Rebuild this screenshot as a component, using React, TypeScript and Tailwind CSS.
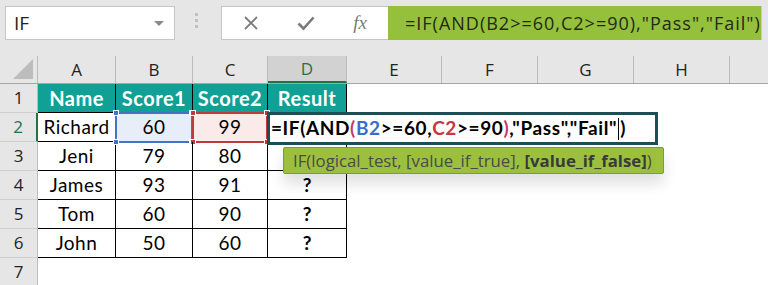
import React from 'react';

const cols = [
  { key: 'A', w: 'w-[78px]' },
  { key: 'B', w: 'w-[77px]' },
  { key: 'C', w: 'w-[75px]' },
  { key: 'D', w: 'w-[79px]' },
  { key: 'E', w: 'w-[95px]' },
  { key: 'F', w: 'w-[96px]' },
  { key: 'G', w: 'w-[96px]' },
  { key: 'H', w: 'w-[96px]' },
];

const data = [
  ['Richard', '60', '99', ''],
  ['Jeni', '79', '80', ''],
  ['James', '93', '91', '?'],
  ['Tom', '60', '90', '?'],
  ['John', '50', '60', '?'],
];

const cellFont = { fontFamily: 'Lato, "Liberation Sans", sans-serif' };
const uiFont = { fontFamily: '"Open Sans", "Noto Sans", sans-serif' };

function Corner({ pos, color }: { pos: string; color: string }) {
  return <span className={`absolute h-[6px] w-[6px] border border-white ${pos} ${color}`} />;
}

export default function App() {
  return (
    <div className="relative h-[285px] w-[768px] overflow-hidden bg-white">
      {/* formula bar */}
      <div className="flex h-[56px] items-start bg-[#e6e6e6] pt-[6px]">
        <div className="ml-[5px] flex h-[34px] w-[170px] items-center justify-between border border-[#c6c6c6] bg-white pl-[8px] pr-[10px] text-[19px] text-[#222]" style={uiFont}>
          <span>IF</span>
          <span className="h-0 w-0 border-x-[5px] border-t-[5px] border-x-transparent border-t-[#8a8a8a]" />
        </div>
        <div className="ml-[20px] mt-[7px] flex flex-col gap-[3px]">
          <span className="h-[3px] w-[3px] bg-[#c0c0c0]" />
          <span className="h-[3px] w-[3px] bg-[#c0c0c0]" />
          <span className="h-[3px] w-[3px] bg-[#c0c0c0]" />
        </div>
        <div className="ml-[23px] flex h-[34px] items-center border border-[#c6c6c6] bg-white">
          <div className="flex w-[166px] items-center justify-around pl-[2px] pr-[2px] text-[#7a7a7a]">
            <svg width="16" height="16" viewBox="0 0 16 16"><path d="M2 2 L14 14 M14 2 L2 14" stroke="#7a7a7a" strokeWidth="1.8" /></svg>
            <svg width="18" height="16" viewBox="0 0 18 16"><path d="M1.5 8.5 L6.5 13.5 L16.5 2.5" stroke="#7a7a7a" strokeWidth="2.6" fill="none" /></svg>
            <span className="text-[19px] italic text-[#7a7a7a]" style={{ fontFamily: '"Liberation Serif", serif' }}>fx</span>
          </div>
          <div className="flex h-[34px] w-[373px] items-center bg-[#95c03c] pl-[17px] text-[18px] tracking-[1px] text-[#1f2a14]" style={uiFont}>
            =IF(AND(B2&gt;=60,C2&gt;=90),"Pass","Fail")
          </div>
        </div>
      </div>

      {/* sheet */}
      <div className="relative" style={cellFont}>
        {/* column header */}
        <div className="flex h-[28px] border-b border-[#a6a6a6] bg-[#e6e6e6]">
          <div className="relative w-[38px] border-r border-[#bcbcbc]">
            <span className="absolute bottom-[4px] right-[4px] h-0 w-0 border-b-[20px] border-l-[20px] border-b-[#bdbdbd] border-l-transparent" />
          </div>
          {cols.map((c) => (
            <div
              key={c.key}
              className={`${c.w} flex items-center justify-center border-r border-[#bcbcbc] text-[17px] ${c.key === 'D' ? 'border-b-2 border-b-[#217346] bg-[#d2d2d2] text-[#217346]' : 'text-[#222]'}`}
              style={uiFont}
            >
              {c.key}
            </div>
          ))}
          <div className="flex-1" />
        </div>

        {/* row 1 */}
        <Row n={1}>
          {['Name', 'Score1', 'Score2', 'Result'].map((h, i) => (
            <div key={h} className={`${cols[i].w} flex items-center justify-center border-b border-r border-black bg-[#10a096] text-[20px] font-bold tracking-[0.5px] text-white`}>
              {h}
            </div>
          ))}
        </Row>

        {data.map((r, ri) => (
          <Row key={ri} n={ri + 2} active={ri === 0}>
            <div className={`${cols[0].w} flex items-center justify-center border-b border-r border-black text-[19px] tracking-[0.5px] text-black`}>{r[0]}</div>
            <div className={`${cols[1].w} relative flex items-center justify-center border-b border-r border-black text-[19px] tracking-[0.5px] text-black`}>
              {ri === 0 && (
                <div className="absolute -left-[1px] -top-[1px] h-[31px] w-[78px] border-2 border-[#4472c4] bg-[#e8eef9]">
                  <Corner pos="-left-[4px] -top-[4px]" color="bg-[#4472c4]" />
                  <Corner pos="-right-[4px] -top-[4px]" color="bg-[#4472c4]" />
                  <Corner pos="-left-[4px] -bottom-[4px]" color="bg-[#4472c4]" />
                  <Corner pos="-right-[4px] -bottom-[4px]" color="bg-[#4472c4]" />
                </div>
              )}
              <span className="relative">{r[1]}</span>
            </div>
            <div className={`${cols[2].w} relative flex items-center justify-center border-b border-r border-black text-[19px] tracking-[0.5px] text-black`}>
              {ri === 0 && (
                <div className="absolute -left-[1px] -top-[1px] h-[31px] w-[76px] border-2 border-[#c0393f] bg-[#fbeaea]">
                  <Corner pos="-left-[4px] -top-[4px]" color="bg-[#c0393f]" />
                  <Corner pos="-right-[4px] -top-[4px]" color="bg-[#c0393f]" />
                  <Corner pos="-left-[4px] -bottom-[4px]" color="bg-[#c0393f]" />
                  <Corner pos="-right-[4px] -bottom-[4px]" color="bg-[#c0393f]" />
                </div>
              )}
              <span className="relative">{r[2]}</span>
            </div>
            <div className={`${cols[3].w} flex items-center justify-center border-b border-r border-black text-[19px] font-bold text-black`}>{r[3]}</div>
          </Row>
        ))}

        <Row n={7} />

        {/* in-cell formula editor */}
        <div className="absolute left-[267px] top-[56px] flex h-[33px] w-[391px] items-center border-[3px] border-[#1c4f53] bg-white pl-[1px] text-[19px] font-bold tracking-[0.6px] text-black">
          <span>=IF(AND</span>
          <span className="text-[#c2386c]">(</span>
          <span className="text-[#3a6fc9]">B2</span>
          <span>&gt;=60,</span>
          <span className="text-[#c4393f]">C2</span>
          <span>&gt;=90</span>
          <span className="text-[#c2386c]">)</span>
          <span>,"Pass","Fail"</span>
          <span className="mx-[1px] h-[22px] w-[1px] bg-black" />
          <span>)</span>
        </div>

        {/* function tooltip */}
        <div
          className="absolute left-[283px] top-[91px] flex h-[27px] w-[381px] items-center rounded-[2px] border border-[#7d9e2a] bg-[#9cc03e] pl-[9px] text-[16.8px] text-[#4a4a4a] shadow-[0_10px_14px_rgba(0,0,0,0.12)]"
          style={uiFont}
        >
          IF(logical_test, [value_if_true],&nbsp;<b className="text-[#3a3a3a]">[value_if_false]</b>)
        </div>
      </div>
    </div>
  );
}

function Row({ n, active, children }: { n: number; active?: boolean; children?: React.ReactNode }) {
  return (
    <div className="flex h-[29px]">
      <div
        className={`flex w-[38px] items-center justify-center border-b bg-[#e6e6e6] text-[17px] ${active ? 'border-r-2 border-b-[#cfcfcf] border-r-[#217346] text-[#217346]' : 'border-r border-b-[#cfcfcf] border-r-[#bcbcbc] text-[#222]'}`}
        style={uiFont}
      >
        {n}
      </div>
      {children}
    </div>
  );
}
